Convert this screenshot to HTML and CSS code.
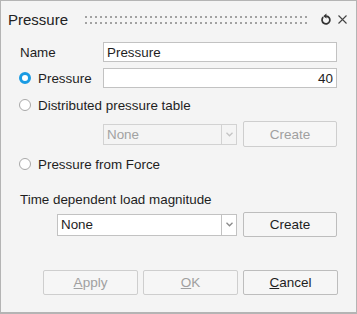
FILE: index.html
```html
<!DOCTYPE html>
<html lang="en">
<head>
  <meta charset="UTF-8" />
  <title>Pressure</title>
  <link rel="stylesheet" href="styles.css">
</head>
<body>
  <div class="dialog">
    <div class="titlebar">
      <span class="title">Pressure</span>
      <div class="grip"></div>
      <svg class="icon" width="11" height="12" viewBox="0 0 11 12">
        <path d="M3.2 4.2 A3.9 3.9 0 1 0 6.2 3.1" fill="none" stroke="#333" stroke-width="1.7"/>
        <path d="M6.4 0.6 L3.2 3.3 L6.6 5.4 Z" fill="#333"/>
      </svg>
      <svg class="icon close" width="9" height="9" viewBox="0 0 9 9">
        <path d="M0.5 0.5 L8.5 8.5 M8.5 0.5 L0.5 8.5" stroke="#444" stroke-width="1.1"/>
      </svg>
    </div>

    <div class="form">
      <div class="row first">
        <span class="label">Name</span>
        <input class="field" type="text" value="Pressure">
      </div>

      <div class="row pressure">
        <span class="label radio-label"><span class="radio checked"></span>Pressure</span>
        <input class="field number" type="text" value="40">
      </div>

      <div class="row option">
        <span class="radio"></span>Distributed pressure table
      </div>

      <div class="row combo-row">
        <div class="combo disabled indent-table">
          <span class="combo-text">None</span>
          <span class="combo-arrow">
            <svg width="7" height="5" viewBox="0 0 7 5"><path d="M0.5 0.8 L3.5 3.8 L6.5 0.8" fill="none" stroke="currentColor" stroke-width="1.3"/></svg>
          </span>
        </div>
        <button class="btn" disabled>Create</button>
      </div>

      <div class="row option">
        <span class="radio"></span>Pressure from Force
      </div>

      <div class="row option section">Time dependent load magnitude</div>

      <div class="row combo-row second">
        <div class="combo indent-time">
          <span class="combo-text">None</span>
          <span class="combo-arrow">
            <svg width="7" height="5" viewBox="0 0 7 5"><path d="M0.5 0.8 L3.5 3.8 L6.5 0.8" fill="none" stroke="currentColor" stroke-width="1.3"/></svg>
          </span>
        </div>
        <button class="btn">Create</button>
      </div>

      <div class="row actions">
        <button class="btn" disabled><u>A</u>pply</button>
        <button class="btn" disabled><u>O</u>K</button>
        <button class="btn"><u>C</u>ancel</button>
      </div>
    </div>
  </div>
</body>
</html>
```

FILE: styles.css
```css
body {
  margin: 0;
  font-family: "Liberation Sans", Arial, sans-serif;
  font-size: 13.4px;
  color: #1e1e1e;
}

.dialog {
  width: 357px;
  height: 314px;
  box-sizing: border-box;
  border: 1px solid #b4b4b4;
  border-bottom-width: 2px;
  background: #f4f4f4;
}

.titlebar {
  height: 36px;
  display: flex;
  align-items: center;
  padding: 0 9px 0 7px;
}

.title {
  font-size: 15px;
  color: #222;
}

/* two rows of dots */
.grip {
  flex: 1;
  height: 8px;
  margin: 1px 10px 0 14px;
  background-image:
    linear-gradient(90deg, #f4f4f4 3px, transparent 3px),
    linear-gradient(#a2a2a2 2px, transparent 2px, transparent 6px, #a2a2a2 6px);
  background-size: 5px 100%, 100% 8px;
}

.icon {
  display: block;
}

.close {
  margin-left: 7px;
}

.form {
  padding: 0 19px;
}

.row {
  display: flex;
  align-items: center;
}

.first {
  margin-top: 5px;
  height: 20px;
}

.pressure {
  margin-top: 6px;
  height: 20px;
}

.label {
  width: 83px;
  flex: none;
}

.radio-label {
  display: flex;
  align-items: center;
  margin-left: -1px;
  width: 84px;
}

.field {
  flex: 1;
  height: 20px;
  box-sizing: border-box;
  border: 1px solid #c2c2c2;
  background: #fff;
  font: inherit;
  color: #1e1e1e;
  padding: 0 3px;
  outline: none;
}

.number {
  text-align: right;
}

.radio {
  width: 12px;
  height: 12px;
  box-sizing: border-box;
  border: 1px solid #a8a8a8;
  border-radius: 50%;
  background: #fff;
  margin-right: 7px;
  flex: none;
}

.radio.checked {
  border: 3.5px solid #1a9be3;
  background: #fff;
}

.option {
  height: 22px;
  margin-top: 6px;
  margin-left: -1px;
}

.section {
  margin-top: 13px;
  margin-left: 0;
}

.combo-row {
  height: 26px;
  margin-top: 5px;
}

.combo-row.second {
  height: 25px;
  margin-top: 2px;
}

.combo {
  display: flex;
  height: 22px;
  box-sizing: border-box;
  border: 1px solid #c2c2c2;
  background: #fff;
}

.indent-table {
  margin-left: 83px;
  width: 134px;
  height: 21px;
}

.indent-time {
  margin-left: 37px;
  width: 180px;
}

.combo-text {
  flex: 1;
  padding-left: 3px;
  line-height: 20px;
}

.combo-arrow {
  width: 14px;
  border-left: 1px solid #c2c2c2;
  color: #8a8a8a;
  display: flex;
  align-items: center;
  justify-content: center;
}

.combo-arrow svg {
  display: block;
}

.combo.disabled {
  background: #f4f4f4;
  border-color: #d2d2d2;
  color: #a2a2a2;
}

.combo.disabled .combo-arrow {
  border-left-color: #d2d2d2;
  color: #c4c4c4;
}

.btn {
  width: 95px;
  height: 100%;
  margin-left: 6px;
  box-sizing: border-box;
  border: 1px solid #bdbdbd;
  border-radius: 2px;
  background: #f6f6f6;
  font: inherit;
  font-size: 13.5px;
  color: #1e1e1e;
  padding: 0;
}

.btn:disabled {
  color: #a0a0a0;
  border-color: #cecece;
}

.combo-row .btn {
  width: 94px;
}

.actions {
  height: 25px;
  margin-top: 33px;
  justify-content: flex-end;
  margin-right: -1px;
}

.actions .btn {
  margin-left: 5px;
}
```
